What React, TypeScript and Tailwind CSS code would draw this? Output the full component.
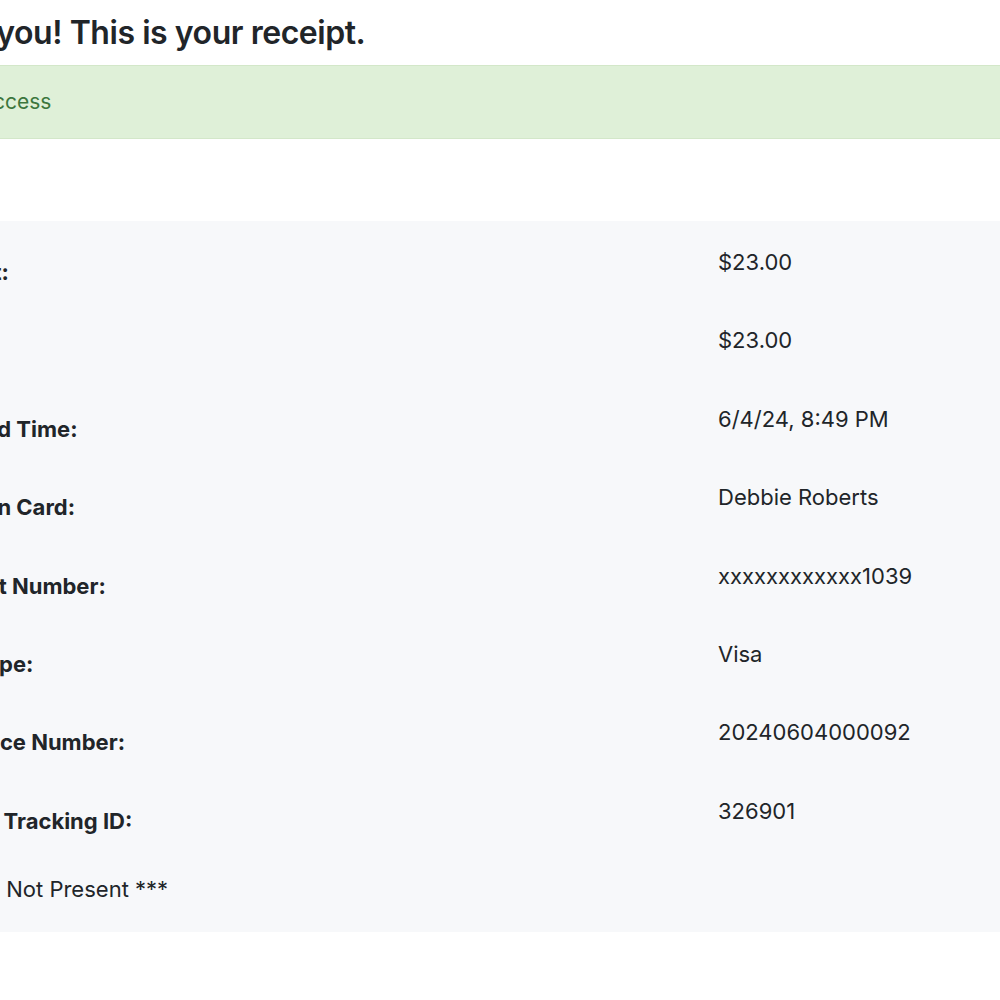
import React from "react"

const rows = [
  { label: "Amount:", value: "$23.00" },
  { label: "Total:", value: "$23.00" },
  { label: "Date and Time:", value: "6/4/24, 8:49 PM" },
  { label: "Name on Card:", value: "Debbie Roberts" },
  { label: "Account Number:", value: "xxxxxxxxxxxx1039" },
  { label: "Card Type:", value: "Visa" },
  { label: "Reference Number:", value: "20240604000092" },
  { label: "Internal Tracking ID:", value: "326901" },
]

export default function App() {
  return (
    <div className="w-[1000px] h-[1000px] overflow-hidden bg-white text-[#212529] font-['Inter',sans-serif]">
      <div className="-ml-[100px] w-[1200px]">
        {/* Heading */}
        <h1 className="pt-[14px] -ml-[6px] text-[32px] leading-[38px] font-semibold tracking-[-0.45px]">
          Thank you! This is your receipt.
        </h1>

        {/* Alert */}
        <div className="mt-[13px] h-[74px] flex items-center pl-[66px] bg-[#dff0d8] border border-[#d3e7c9] text-[#3c763d] text-[21px]">
          Success
        </div>

        {/* Receipt table */}
        <div className="mt-[82px] bg-[#f7f8fa] pl-[16px] pt-[29px] pb-[31px] text-[22px] leading-[24px]">
          {rows.map(row => (
            <div key={row.label} className="grid grid-cols-[802px_1fr] h-[78.4px]">
              <div className="pt-[10px] font-bold">{row.label}</div>
              <div>{row.value}</div>
            </div>
          ))}
          <div className="-ml-[5px]">*** Card Not Present ***</div>
        </div>
      </div>
    </div>
  )
}
